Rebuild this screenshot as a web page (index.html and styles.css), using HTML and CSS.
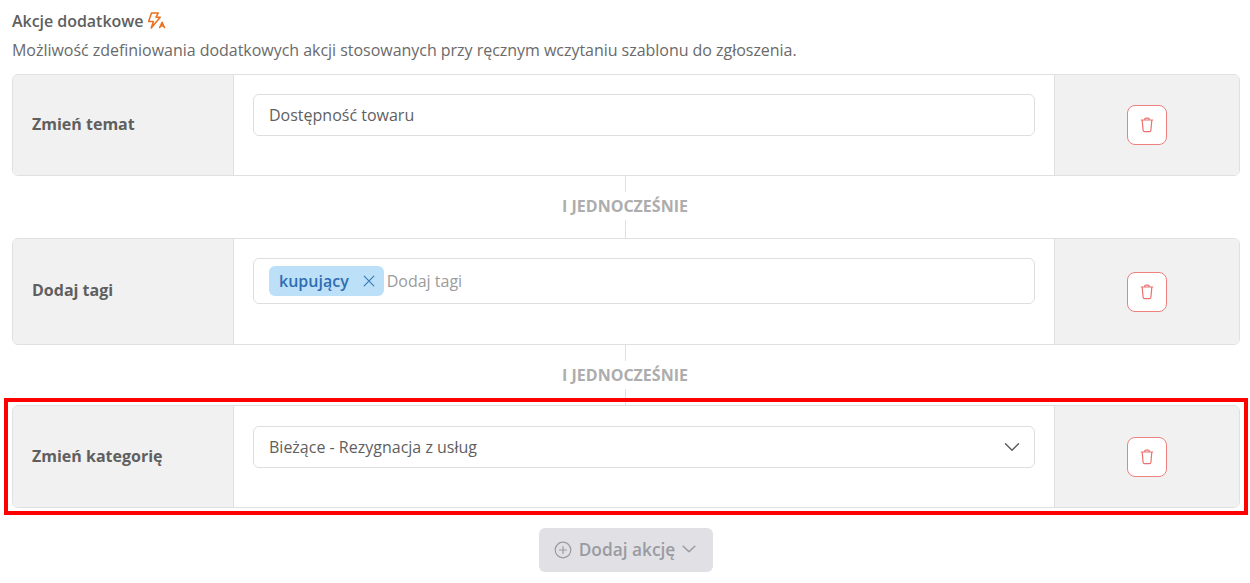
FILE: index.html
```html
<!DOCTYPE html>
<html lang="pl">
<head>
<meta charset="utf-8">
<title>Akcje dodatkowe</title>
<link rel="stylesheet" href="styles.css">
</head>
<body>
<main class="page">
  <h2 class="title">Akcje dodatkowe
    <svg class="bolt" width="20" height="18" viewBox="0 0 20 18" fill="none" stroke="#e8701f" stroke-width="1.5" stroke-linejoin="round" stroke-linecap="round"><path d="M4.5 1h6.8L9 5.2h4.2L4.2 16l2.2-6.6H1.6z"/><path d="M12.7 15.6l2.4-5.4 2.4 5.4M13.6 14h3"/></svg>
  </h2>
  <p class="desc">Możliwość zdefiniowania dodatkowych akcji stosowanych przy ręcznym wczytaniu szablonu do zgłoszenia.</p>

  <section class="card first">
    <div class="label">Zmień temat</div>
    <div class="body"><div class="field">Dostępność towaru</div></div>
    <div class="side"><button class="del"><svg width="16" height="16" viewBox="0 0 16 16" fill="none" stroke="#ee6e6e" stroke-width="1.2" stroke-linecap="round" stroke-linejoin="round"><path d="M2.3 3h11.4M3.2 3.2l.9 10q.1 1.4 1.5 1.4h4.8q1.4 0 1.5-1.4l.9-10M5.5 3q.2-1.8 1.5-1.8h2q1.3 0 1.5 1.8"/></svg></button></div>
  </section>

  <div class="join"><span>I JEDNOCZEŚNIE</span></div>

  <section class="card tags">
    <div class="label">Dodaj tagi</div>
    <div class="body"><div class="field tagfield">
      <span class="tag">kupujący<svg width="12" height="12" viewBox="0 0 12 12" fill="none" stroke="#3c7ab8" stroke-width="1.2" stroke-linecap="round"><path d="M1.2 1.2l9.6 9.6M10.8 1.2l-9.6 9.6"/></svg></span><span class="ph">Dodaj tagi</span>
    </div></div>
    <div class="side"><button class="del"><svg width="16" height="16" viewBox="0 0 16 16" fill="none" stroke="#ee6e6e" stroke-width="1.2" stroke-linecap="round" stroke-linejoin="round"><path d="M2.3 3h11.4M3.2 3.2l.9 10q.1 1.4 1.5 1.4h4.8q1.4 0 1.5-1.4l.9-10M5.5 3q.2-1.8 1.5-1.8h2q1.3 0 1.5 1.8"/></svg></button></div>
  </section>

  <div class="join second"><span>I JEDNOCZEŚNIE</span></div>

  <section class="card marked">
    <div class="label">Zmień kategorię</div>
    <div class="body"><div class="field select">Bieżące - Rezygnacja z usług
      <svg width="16" height="10" viewBox="0 0 16 10" fill="none" stroke="#5f5f5f" stroke-width="1.5" stroke-linecap="round" stroke-linejoin="round"><path d="M1.5 1.8L8 8.2l6.5-6.4"/></svg></div></div>
    <div class="side"><button class="del"><svg width="16" height="16" viewBox="0 0 16 16" fill="none" stroke="#ee6e6e" stroke-width="1.2" stroke-linecap="round" stroke-linejoin="round"><path d="M2.3 3h11.4M3.2 3.2l.9 10q.1 1.4 1.5 1.4h4.8q1.4 0 1.5-1.4l.9-10M5.5 3q.2-1.8 1.5-1.8h2q1.3 0 1.5 1.8"/></svg></button></div>
  </section>

  <div class="actions">
    <button class="add">
      <svg width="18" height="18" viewBox="0 0 18 18" fill="none" stroke="#9a9aa2" stroke-width="1.2" stroke-linecap="round"><circle cx="9" cy="9" r="7.8"/><path d="M9 5.5v7M5.5 9h7"/></svg>
      <span class="add-text">Dodaj akcję</span>
      <svg class="add-chev" width="14" height="8" viewBox="0 0 14 8" fill="none" stroke="#9a9aa2" stroke-width="1.5" stroke-linecap="round" stroke-linejoin="round"><path d="M1.2 1.2L7 6.8l5.8-5.6"/></svg>
    </button>
  </div>
</main>
</body>
</html>
```
FILE: styles.css
```css
* { box-sizing: border-box; }
html, body { margin: 0; background: #fff; }
body { font-family: "Open Sans", sans-serif; color: #5f5f5f; overflow: hidden; }
.page { width: 1250px; height: 583px; padding: 10px 10px 0 12px; }
.title { margin: 0; display: flex; align-items: center; gap: 4px; font-size: 16px; line-height: 22px; font-weight: 600; letter-spacing: -0.04px; color: #5f5f5f; }
.desc { margin: 7px 0 13px; font-size: 16px; line-height: 22px; letter-spacing: -0.03px; color: #6a6a6a; }
.card { display: flex; height: 102px; border: 1px solid #e0e0e0; border-radius: 6px; background: #fff; }
.card.tags { height: 107px; }
.card.marked { position: relative; height: 103px; }
.card.marked::after { content: ""; position: absolute; inset: -8px -9px; border: 4px solid #f00; pointer-events: none; }
.label { width: 221px; flex: none; display: flex; align-items: center; padding: 0 0 3px 19px; background: #f1f1f1; border-right: 1px solid #e0e0e0; border-radius: 5px 0 0 5px; font-size: 16px; font-weight: 700; color: #5f5f5f; }
.marked .label { padding-bottom: 1px; }
.body { flex: 1; padding: 19px 19px 0 19px; }
.marked .body { padding-top: 20px; }
.field { height: 42px; display: flex; align-items: center; padding: 0 15px; border: 1px solid #dedede; border-radius: 6px; font-size: 16px; color: #5f5f5f; background: #fff; }
.tagfield { height: 46px; padding: 0 15px; }
.select { justify-content: space-between; padding-right: 14px; }
.tag { display: inline-flex; align-items: center; height: 30px; padding: 0 9px 0 10px; gap: 14px; background: #bde0f9; border-radius: 6px; color: #2f6db0; font-weight: 600; }
.ph { margin-left: 3px; color: #9b9b9b; }
.side { width: 185px; flex: none; display: flex; align-items: center; justify-content: center; background: #f1f1f1; border-left: 1px solid #e0e0e0; border-radius: 0 5px 5px 0; }
.first .del { margin-bottom: 1px; }
.del { width: 40px; height: 40px; padding: 0; display: flex; align-items: center; justify-content: center; background: #fff; border: 1px solid #ee8080; border-radius: 8px; }
.join { height: 62px; margin-right: 2px; padding-bottom: 2px; display: flex; align-items: center; justify-content: center; background: linear-gradient(#e0e0e0, #e0e0e0) center / 1px 100% no-repeat; }
.join.second { height: 60px; padding-bottom: 0; }
.join span { background: #fff; font-size: 16px; line-height: 28px; font-weight: 700; color: #adadad; }
.actions { display: flex; justify-content: center; margin-top: 20px; }
.add { width: 174px; height: 44px; display: flex; align-items: center; justify-content: center; gap: 7px; padding: 0 2px 0 0; border: 0; border-radius: 6px; background: #e1e1e5; font-family: inherit; font-size: 17.3px; font-weight: 600; color: #9a9aa2; }
.add-text { margin-top: -2px; }
.add-chev { margin-top: -2px; }
```
